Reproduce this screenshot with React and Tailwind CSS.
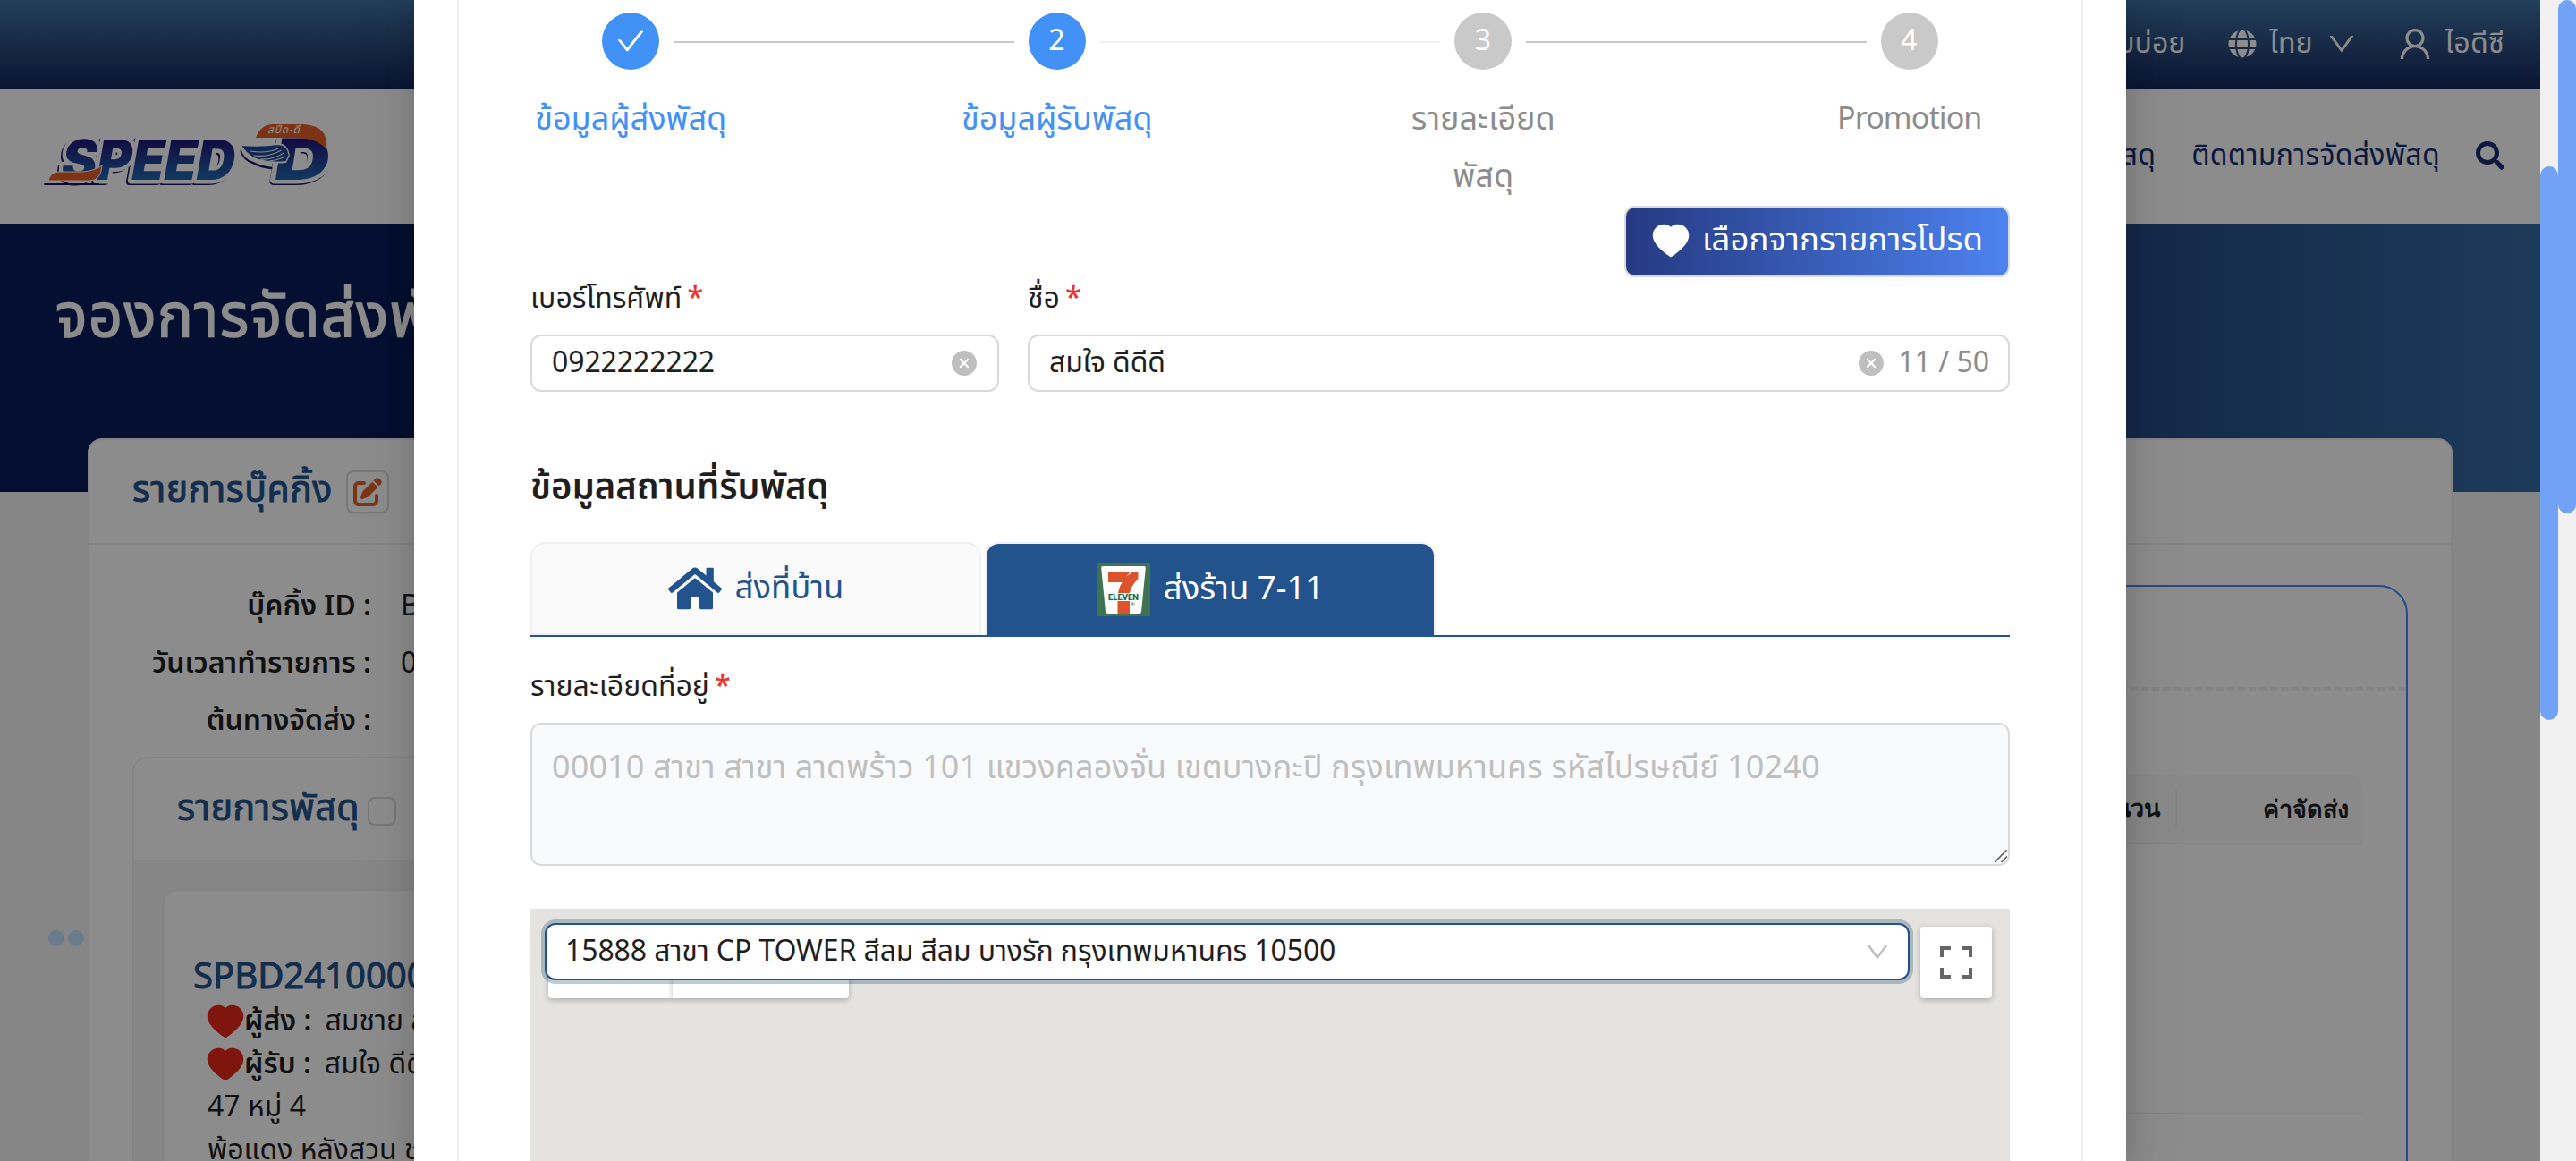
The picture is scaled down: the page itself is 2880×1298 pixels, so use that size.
import { AiFillCloseCircle, AiFillHeart, AiOutlineCheck, AiOutlineDown, AiOutlineUser } from "react-icons/ai";
import { FaGlobe, FaHome, FaSearch } from "react-icons/fa";
import { FaPenToSquare } from "react-icons/fa6";

function SpeedDLogo() {
  const word = { x: 26, y: 72, fontSize: 62, fontWeight: 900, fontFamily: "Inter, sans-serif", textLength: 194, lengthAdjust: "spacingAndGlyphs" };
  const letter = { x: 264, y: 72, fontSize: 64, fontWeight: 900, fontFamily: "Inter, sans-serif", textLength: 62, lengthAdjust: "spacingAndGlyphs" };
  return (
    <svg className="-mt-[3px] h-[90px] w-[340px]" viewBox="0 0 340 90" aria-label="SPEED-D">
      <defs>
        <linearGradient id="brand" x1="0" y1="0" x2="0" y2="1">
          <stop offset="0.2" stopColor="#1f1477" />
          <stop offset="0.85" stopColor="#1f6fb4" />
        </linearGradient>
      </defs>
      <g transform="translate(0 72) skewX(-10) translate(0 -72)" strokeLinejoin="round">
        <text {...word} transform="translate(-2 2)" fill="#1d1563" stroke="#1d1563" strokeWidth="8">SPEED</text>
        <text {...word} fill="#fff" stroke="#fff" strokeWidth="9">SPEED</text>
        <text {...word} fill="url(#brand)">SPEED</text>
      </g>
      <path d="M10 77 H70" stroke="#1d1563" strokeWidth="2" strokeLinecap="round" />
      <path d="M14 73 Q16 64 25 63 L52 63 Q66 62 74 56 Q73 73 60 73Z" fill="#e65f25" stroke="#fff" strokeWidth="1" />
      <g transform="translate(0 72) skewX(-9) translate(0 -72)" strokeLinejoin="round">
        <text {...letter} transform="translate(-1 2)" fill="#1d1563" stroke="#1d1563" strokeWidth="8">D</text>
        <text {...letter} fill="#fff" stroke="#fff" strokeWidth="9">D</text>
        <text {...letter} fill="url(#brand)">D</text>
      </g>
      <path d="M246 25 Q251 11 264 10 L300 10 Q328 12 325 38 Q314 25 290 25Z" fill="#e65f25" />
      <g transform="translate(229 0) scale(0.57 1) translate(-188 0)">
        <path d="M188 39 Q194 50 212 53 Q228 58 250 59" fill="none" stroke="#1d1563" strokeWidth="2.500" />
        <path d="M188 33 Q228 35 262 32 Q281 33 283 45 L277 52 Q240 54 214 48 Q196 42 188 33Z" fill="#1c4797" stroke="#fff" strokeWidth="2" />
        <path d="M207 40 Q240 43 262 37 M214 45 Q244 47 268 39 M226 49 Q250 50 273 42 M244 51 Q262 50 276 46" fill="none" stroke="#fff" strokeWidth="1.200" />
      </g>
      <text x="259" y="20" fontSize="12" fontStyle="italic" fill="#fff" fontFamily="Noto Sans Thai, sans-serif" textLength="36">สปีด-ดี</text>
    </svg>
  );
}

function SevenElevenLogo() {
  return (
    <svg className="size-[60px]" viewBox="0 0 60 60" aria-label="7-Eleven">
      <rect width="60" height="60" fill="#3f7351" />
      <path d="M7 4 H53 Q55 4 54.800 6 L50 55 Q49.500 57 47 57 H13 Q10.500 57 10 55 L5.200 6 Q5 4 7 4Z" fill="#fff" />
      <path d="M13 10 H39 Q33 14 30 22 H13Z M41 10 H46.500 V18 Q38 27 37 34 H24 Q27 18 41 10Z" fill="#dd532b" />
      <path d="M23.500 43 H37 V58 H23.500Z" fill="#dd532b" />
      <text x="13" y="41.500" fontSize="9.500" fontWeight="900" fill="#23694a" fontFamily="Roboto, sans-serif" textLength="34" lengthAdjust="spacingAndGlyphs">ELEVEN</text>
      <text x="38" y="48.500" fontSize="6" fill="#555" fontFamily="Roboto, sans-serif">®</text>
    </svg>
  );
}

function TopBar() {
  return (
    <div className="flex h-[100px] items-center justify-end gap-[54px] bg-linear-to-b from-[#3e73a7] via-[#2b4d7f] to-[#152660] pb-[2px] pr-10 text-[32px] text-white">
      <span>คำถามที่พบบ่อย</span>
      <span className="-ml-[6px] flex items-center">
        <FaGlobe className="mr-[14px] size-8" />
        ไทย
        <AiOutlineDown className="ml-[14px] size-9" />
      </span>
      <span className="-ml-[12px] flex items-center">
        <AiOutlineUser className="mr-[12px] size-11" />
        <span className="tracking-[0.3px]">ไอดีซี</span>
      </span>
    </div>
  );
}

function SiteHeader() {
  return (
    <div className="flex h-[150px] items-center bg-white pl-10 pr-10 text-[32px] text-[#142f72]">
      <SpeedDLogo />
      <nav className="ml-auto flex items-center gap-[40px] pb-[2px] tracking-[0.3px]">
        <span>จองการจัดส่งพัสดุ</span>
        <span>ติดตามการจัดส่งพัสดุ</span>
        <FaSearch className="size-8" />
      </nav>
    </div>
  );
}

function BookingField({ label, value }) {
  return (
    <div className="flex h-16 items-center text-[32px] text-[#1f1f1f]">
      <span className="w-[267px] whitespace-nowrap text-right font-semibold">{label} :</span>
      <span className="ml-[33px]">{value}</span>
    </div>
  );
}

function ParcelParty({ label, name }) {
  return (
    <div className="flex h-12 items-center">
      <AiFillHeart className="-ml-[4px] -mr-[3px] size-12 text-[#e7291a]" />
      <b className="font-semibold">{label} :</b>
      <span className="ml-[15px]">{name}</span>
    </div>
  );
}

function BookingColumn() {
  return (
    <div className="w-[1250px] pt-[37px]">
      <BookingField label="บุ๊คกิ้ง ID" value="BK2410000012" />
      <BookingField label="วันเวลาทำรายการ" value="03/10/2024" />
      <BookingField label="ต้นทางจัดส่ง" value="" />
      <div className="mt-2 h-[520px] rounded-t-2xl border-2 border-[#f0f0f0]">
        <div className="flex h-[114px] items-center pl-[48px] text-[41px] tracking-[0.5px] text-[#23538d] [-webkit-text-stroke:1px_#23538d]">
          รายการพัสดุ
          <span className="ml-[9px] mt-[4px] size-8 rounded-lg border-2 border-[#d9d9d9]" />
        </div>
        <div className="h-full bg-[#f5f5f5] pl-8 pt-8">
          <div className="h-[460px] rounded-t-2xl border-2 border-[#f0f0f0] bg-white pl-[32px] pt-[70px]">
            <div className="h-[52px] text-[40px] leading-[54px] text-[#23538d] [-webkit-text-stroke:1px_#23538d]">SPBD241000012345</div>
            <div className="pl-[16px] text-[32px] leading-[48px] text-[#1f1f1f]">
              <ParcelParty label="ผู้ส่ง" name="สมชาย สมมุติ" />
              <ParcelParty label="ผู้รับ" name="สมใจ ดีดีดี" />
              <div>47 หมู่ 4</div>
              <div>พ้อแดง หลังสวน ชุมพร</div>
            </div>
          </div>
        </div>
      </div>
    </div>
  );
}

function FeeColumn() {
  return (
    <div className="mt-[45px] w-[1260px] rounded-t-[32px] border-2 border-[#4589ff]">
      <div className="h-[116px] border-b-4 border-dashed border-[#f0f0f0]" />
      <div className="ml-12 mr-12 mt-[94px]">
        <div className="flex h-[78px] items-center rounded-t-2xl border-b-2 border-[#f0f0f0] bg-[#fafafa] font-['Liberation_Sans',sans-serif] text-[27px] font-bold text-[#1f1f1f]">
          <span className="ml-auto pr-[17px]">จำนวน</span>
          <span className="h-[46px] w-[210px] border-l-2 border-[#f0f0f0] pr-4 text-right leading-[48px]">ค่าจัดส่ง</span>
        </div>
        <div className="h-[302px] border-b-2 border-[#f0f0f0]" />
      </div>
    </div>
  );
}

function BackgroundPage() {
  return (
    <div className="h-[1298px] w-[2840px] overflow-hidden bg-[#f5f5f5]">
      <TopBar />
      <SiteHeader />
      <div className="h-[300px] bg-linear-to-r from-[#091d59] from-55% via-[#264a86] via-84% to-[#356ca6] pl-[62px] pt-[62px] text-[67px] leading-[88px] tracking-[1.200px] text-white [-webkit-text-stroke:1.5px_#fff]">
        จองการจัดส่งพัสดุ
      </div>
      <div className="flex">
        <div className="flex w-[98px] shrink-0 gap-1 pl-[54px] pt-[490px]">
          <span className="size-[18px] rounded-full bg-[#c1e0fd]" />
          <span className="size-[18px] rounded-full bg-[#c1e0fd]" />
        </div>
        <div className="-mt-[60px] h-[900px] w-[2644px] shrink-0 rounded-t-2xl border-2 border-[#f0f0f0] bg-white">
          <div className="flex h-[117px] items-center border-b-2 border-[#f0f0f0] pb-[2px] pl-[48px] text-[41px] tracking-[0.5px] text-[#23538d] [-webkit-text-stroke:1px_#23538d]">
            รายการบุ๊คกิ้ง
            <span className="ml-[15px] mt-[2px] flex size-12 items-center justify-center rounded-lg border-2 border-[#d9d9d9] shadow-[0_4px_0_rgba(0,0,0,0.02)]">
              <FaPenToSquare className="size-8 text-[#e3622a]" />
            </span>
          </div>
          <div className="flex justify-between px-12">
            <BookingColumn />
            <FeeColumn />
          </div>
        </div>
      </div>
    </div>
  );
}

const steps = [
  { mark: <AiOutlineCheck className="size-9" />, label: "ข้อมูลผู้ส่งพัสดุ", active: true },
  { mark: "2", label: "ข้อมูลผู้รับพัสดุ", active: true },
  { mark: "3", label: "รายละเอียดพัสดุ", active: false },
  { mark: "4", label: "Promotion", active: false, latin: true },
];
const connectors = ["bg-[#c8c8c8]", "bg-[#f0f0f0]", "bg-[#c8c8c8]"];

function Steps() {
  return (
    <div className="h-[230px] pt-[14px]">
      <div className="flex items-center pl-[80px]">
        {steps.map((s, i) => (
          <div key={s.label} className="flex items-center">
            <div className={`flex size-16 items-center justify-center rounded-full text-[32px] leading-none text-white ${s.active ? "bg-[#4291f7]" : "bg-[#c9c9c9]"}`}>
              {s.mark}
            </div>
            {i < 3 && <div className={`mx-4 mt-[2px] h-[2px] w-[380.500px] ${connectors[i]}`} />}
          </div>
        ))}
      </div>
      <div className="-mx-[126px] mt-[24px] grid w-[1906px] grid-cols-4 text-center leading-[64px]">
        {steps.map((s) => (
          <div
            key={s.label}
            className={`mx-auto w-[232px] ${s.latin ? "text-[34px] tracking-[-0.9px]" : "text-[36px]"} ${s.active ? "text-[#4291f7]" : "text-[#8c8c8c]"}`}
          >
            {s.label === "รายละเอียดพัสดุ" ? <>รายละเอียด<br />พัสดุ</> : s.label}
          </div>
        ))}
      </div>
    </div>
  );
}

function Label({ children }) {
  return (
    <div className="mb-4 h-12 text-[32px] leading-[48px] text-[#1f1f1f]">
      {children} <span className="-ml-[2px] text-[#e8342a] [-webkit-text-stroke:0.4px_#e8342a]">*</span>
    </div>
  );
}

function TextBox({ value, count }) {
  return (
    <div className="flex h-16 items-center rounded-xl border-2 border-[#d9d9d9] bg-white pl-[22px] pr-[21px] text-[32px] text-[#1f1f1f]">
      <span className="mr-auto tracking-[-0.1px]">{value}</span>
      <AiFillCloseCircle className="size-8 text-[#bfbfbf]" />
      {count && <span className="ml-[14px] text-[#8c8c8c]">{count}</span>}
    </div>
  );
}

function BranchMap() {
  return (
    <div className="relative mt-12 h-[282px] bg-[#e4e3df]">
      <div className="absolute left-[20px] top-[20px] flex h-20">
        <div className="w-[139px] rounded-l bg-white shadow-[0_2px_6px_rgba(0,0,0,0.25)]" />
        <div className="w-[197px] rounded-r bg-white shadow-[0_2px_6px_rgba(0,0,0,0.25)]" />
      </div>
      <div className="absolute left-4 top-4 flex h-16 w-[1526px] items-center rounded-xl border-2 border-[#23538d] bg-white pl-[21px] pr-[18px] text-[32px] tracking-[-0.1px] text-[#1f1f1f] shadow-[0_0_0_4px_rgba(35,83,116,0.3)]">
        15888 สาขา CP TOWER สีลม สีลม บางรัก กรุงเทพมหานคร 10500
        <AiOutlineDown className="ml-auto size-8 text-[#bfbfbf]" />
      </div>
      <div className="absolute right-5 top-5 flex size-20 items-center justify-center rounded bg-white shadow-[0_2px_6px_rgba(0,0,0,0.25)]">
        <svg className="size-9" viewBox="0 0 18 18" fill="#666">
          <path d="M0 0v6h2V2h4V0H0zm16 0h-4v2h4v4h2V0h-2zm0 16h-4v2h6v-6h-2v4zM2 12H0v6h6v-2H2v-4z" />
        </svg>
      </div>
    </div>
  );
}

function RecipientForm() {
  return (
    <div className="mx-auto h-[1298px] w-[1818px] overflow-hidden border-x-2 border-[#f0f0f0] px-20">
      <Steps />
      <button className="ml-auto flex h-20 w-[431px] items-center justify-center whitespace-nowrap rounded-xl border-2 border-[#d9d9d9] bg-linear-to-r from-[#253a82] to-[#4d83f0] pb-[2px] pr-[2px] text-[36.500px] leading-none text-white shadow-[0_4px_0_rgba(0,0,0,0.02)]">
        <AiFillHeart className="mr-[11px] size-12 shrink-0" />
        <span className="tracking-[0.1px]">เลือกจากรายการโปรด</span>
      </button>
      <div className="grid grid-cols-[524px_1098px] gap-8">
        <div>
          <Label>เบอร์โทรศัพท์</Label>
          <TextBox value="0922222222" />
        </div>
        <div>
          <Label>ชื่อ</Label>
          <TextBox value="สมใจ ดีดีดี" count="11 / 50" />
        </div>
      </div>
      <h2 className="mt-[78px] h-[60px] text-[40px] font-semibold leading-[60px] text-[#1f1f1f]">ข้อมูลสถานที่รับพัสดุ</h2>
      <div className="mt-[30px] flex h-[106px] gap-1 border-b-2 border-[#23539b] text-[36.500px] leading-none">
        <div className="flex w-[504px] items-center justify-center rounded-t-2xl border-2 border-[#f0f0f0] bg-[#fafafa] text-[#23538d]">
          <FaHome className="mr-[15px] size-[60px]" />
          ส่งที่บ้าน
        </div>
        <div className="flex w-[504px] items-center justify-center rounded-t-2xl border-2 border-b-0 border-[#f0f0f0] bg-[#23538d] text-white">
          <span className="mr-[15px]"><SevenElevenLogo /></span>
          ส่งร้าน 7-11
        </div>
      </div>
      <div className="mt-8">
        <Label>รายละเอียดที่อยู่</Label>
      </div>
      <div className="relative h-40 rounded-xl border-2 border-[#d9d9d9] bg-[#f9fafc] px-[22px] pt-[22px] text-[36px] leading-[54px] tracking-[0.1px] text-[#bfbfbf]">
        00010 สาขา สาขา ลาดพร้าว 101 แขวงคลองจั่น เขตบางกะปิ กรุงเทพมหานคร รหัสไปรษณีย์ 10240
        <svg className="absolute bottom-[2px] right-[1px] size-[14px]" viewBox="0 0 14 14" fill="none" stroke="#555" strokeWidth="1.500">
          <path d="M0 14 L14 0 M7.500 14 L14 7.500" />
        </svg>
      </div>
      <BranchMap />
    </div>
  );
}

function ScrollTrack({ children }) {
  return <div className="h-[1298px] w-5 bg-[#f0f0f0]">{children}</div>;
}

export default function App() {
  return (
    <div className="relative h-[1298px] w-[2880px] overflow-hidden font-['Noto_Sans_Thai','Noto_Sans',sans-serif]">
      <BackgroundPage />
      <div className="absolute inset-0 flex bg-black/45">
        <div className="flex flex-1 justify-center overflow-hidden">
          <div className="w-[1914px] bg-white shadow-[0_12px_32px_rgba(0,0,0,0.16),0_6px_64px_16px_rgba(0,0,0,0.06)]">
            <RecipientForm />
          </div>
        </div>
        <ScrollTrack>
          <div className="h-[186px]" />
          <div className="h-[619px] rounded-full bg-[#71a2f6]" />
        </ScrollTrack>
        <ScrollTrack>
          <div className="h-[574px] rounded-full bg-[#71a2f6]" />
        </ScrollTrack>
      </div>
    </div>
  );
}
